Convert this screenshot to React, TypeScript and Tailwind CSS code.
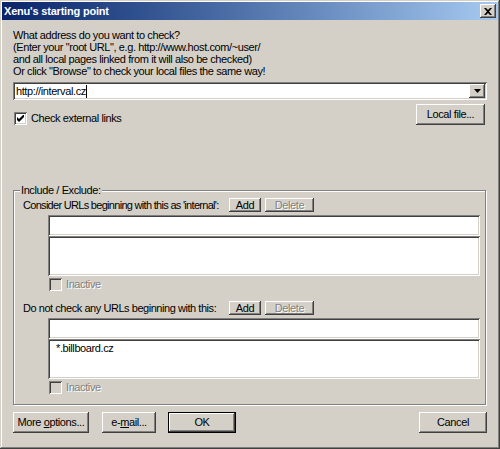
import React from 'react';

const raised =
  'shadow-[inset_-1px_-1px_#404040,inset_1px_1px_#ffffff,inset_-2px_-2px_#808080,inset_2px_2px_#d4d0c8]';
const sunken =
  'shadow-[inset_1px_1px_#808080,inset_-1px_-1px_#ffffff,inset_2px_2px_#404040,inset_-2px_-2px_#d4d0c8]';

function Button({
  children,
  className = '',
  disabled = false,
  isDefault = false,
}: {
  children: React.ReactNode;
  className?: string;
  disabled?: boolean;
  isDefault?: boolean;
}) {
  return (
    <div
      className={`flex items-center justify-center whitespace-nowrap bg-[#d4d0c8] ${raised} ${
        isDefault ? 'border border-black' : ''
      } ${disabled ? 'text-[#808080] [text-shadow:1px_1px_0_#ffffff]' : 'text-black'} ${className}`}
    >
      {children}
    </div>
  );
}

function CheckBox({ checked = false, disabled = false }: { checked?: boolean; disabled?: boolean }) {
  return (
    <div
      className={`w-[13px] h-[13px] shrink-0 ${sunken} ${disabled ? 'bg-[#d4d0c8]' : 'bg-white'} flex items-center justify-center`}
    >
      {checked && (
        <svg width="7" height="7" viewBox="0 0 7 7">
          <path d="M0 2v3l2 2 5-5V-1L2 4z" fill="#000" />
        </svg>
      )}
    </div>
  );
}

function UrlSection({ title, items, tight }: { title: string; items: string[]; tight?: boolean }) {
  return (
    <div className="flex flex-col">
      <div className="flex items-center h-[14px]">
        <div
          className={`w-[215px] shrink-0 pl-[9px] whitespace-nowrap ${tight ? 'tracking-[-0.7px]' : 'tracking-[-0.45px]'}`}
        >
          {title}
        </div>
        <Button className="w-[32px] h-[14px]">Add</Button>
        <Button className="w-[49px] h-[14px] ml-[4px]" disabled>
          Delete
        </Button>
      </div>
      <div className="ml-[34px] mt-[3px] w-[432px] flex flex-col">
        <div className={`h-[21px] bg-white ${sunken}`} />
        <div className={`h-[40px] bg-white ${sunken} pl-[8px] pt-[3px] leading-[13px]`}>
          {items.map((it) => (
            <div key={it}>{it}</div>
          ))}
        </div>
        <div className="flex items-center mt-[2px] ml-[1px] h-[13px]">
          <CheckBox disabled />
          <span className="ml-[4px] text-[#808080] [text-shadow:1px_1px_0_#ffffff]">Inactive</span>
        </div>
      </div>
    </div>
  );
}

export default function App() {
  return (
    <div
      className={`w-[500px] h-[449px] bg-[#d4d0c8] p-[2px] flex flex-col text-[11px] leading-[13px] tracking-[-0.4px] text-black shadow-[inset_-1px_-1px_#404040,inset_1px_1px_#d4d0c8,inset_-2px_-2px_#808080,inset_2px_2px_#ffffff]`}
      style={{ fontFamily: '"Liberation Sans", Arial, sans-serif' }}
    >
      {/* Title bar */}
      <div className="h-[18px] flex items-center bg-gradient-to-r from-[#0a246a] to-[#a6caf0] pl-[2px] pr-[2px]">
        <span className="font-bold text-white tracking-[-0.2px]">Xenu's starting point</span>
        <Button className="ml-auto w-[16px] h-[14px]">
          <svg width="8" height="7" viewBox="0 0 8 7">
            <path d="M0 0h2l2 2 2-2h2L5 3.5 8 7H6L4 5 2 7H0l3-3.5z" fill="#000" />
          </svg>
        </Button>
      </div>

      {/* Content */}
      <div className="flex-1 flex flex-col px-[11px]">
        <div className="mt-[9px] leading-[12px]">
          <div>What address do you want to check?</div>
          <div>(Enter your "root URL", e.g. http://www.host.com/~user/</div>
          <div>and all local pages linked from it will also be checked)</div>
          <div>Or click "Browse" to check your local files the same way!</div>
        </div>

        {/* Combo */}
        <div className={`mt-[5px] h-[18px] bg-white ${sunken} flex items-center pl-[3px] pr-[2px]`}>
          <span>http://interval.cz</span>
          <span className="w-[1px] h-[13px] bg-black" />
          <Button className="ml-auto w-[16px] h-[14px]">
            <svg width="7" height="4" viewBox="0 0 7 4">
              <path d="M0 0h7L3.5 4z" fill="#000" />
            </svg>
          </Button>
        </div>

        <div className="mt-[4px] flex items-start">
          <div className="flex items-center mt-[8px] ml-[1px]">
            <CheckBox checked />
            <span className="ml-[4px]">Check external links</span>
          </div>
          <Button className="ml-auto mr-[2px] w-[69px] h-[21px]">Local file...</Button>
        </div>

        {/* Group */}
        <fieldset className="mt-[59px] mr-[1px] border border-[#808080] shadow-[inset_1px_1px_#ffffff,1px_1px_#ffffff] pb-[10px]">
          <legend className="ml-[6px] px-[1px] bg-[#d4d0c8]">Include / Exclude:</legend>
          <div className="flex flex-col pt-[1px]">
            <UrlSection title="Consider URLs beginning with this as 'internal':" items={[]} tight />
            <div className="h-[10px]" />
            <UrlSection title="Do not check any URLs beginning with this:" items={['*.billboard.cz']} />
          </div>
        </fieldset>

        {/* Buttons */}
        <div className="mt-[7px] flex">
          <Button className="w-[76px] h-[21px]">
            <span>
              More <u>o</u>ptions...
            </span>
          </Button>
          <Button className="ml-[13px] w-[54px] h-[21px]">
            <span>
              e-<u>m</u>ail...
            </span>
          </Button>
          <Button className="ml-[12px] w-[68px] h-[21px]" isDefault>
            OK
          </Button>
          <Button className="ml-auto w-[68px] h-[21px]">Cancel</Button>
        </div>
      </div>
    </div>
  );
}
